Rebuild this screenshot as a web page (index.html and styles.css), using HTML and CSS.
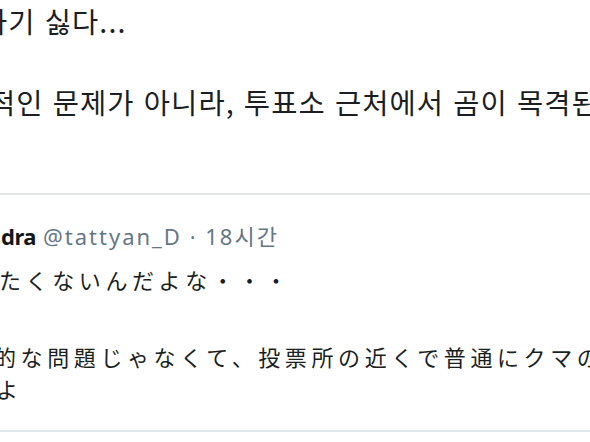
FILE: index.html
```html
<!DOCTYPE html>
<html lang="ko">
<head>
<meta charset="utf-8">
<title>Tweet</title>
<link rel="stylesheet" href="styles.css">
</head>
<body>
  <div class="crop">
    <div class="main-text">
      <p class="line kr l1">가기 싫다...</p>
      <p class="line kr l2">적인 문제가 아니라, 투표소 근처에서 곰이 목격된</p>
    </div>
    <article class="reply">
      <div class="reply-head"><span class="name">dra</span><span class="meta">@tattyan_D · 18시간</span></div>
      <p class="line jp j1" lang="ja">たくないんだよな・・・</p>
      <p class="line jp j2" lang="ja">的な問題じゃなくて、投票所の近くで普通にクマの</p>
      <p class="line jp j3" lang="ja">よ</p>
    </article>
  </div>
</body>
</html>
```
FILE: styles.css
```css
html, body {
  margin: 0;
  padding: 0;
  background: #ffffff;
  overflow: hidden;
}
body {
  width: 590px;
  height: 442px;
  font-family: "Noto Sans", "Noto Sans CJK KR", sans-serif;
  color: #14171a;
}
.main-text {
  padding-top: 1px;
}
.line {
  margin: 0;
  white-space: nowrap;
}
.kr {
  font-family: "Noto Sans CJK KR", sans-serif;
  font-size: 28.5px;
  line-height: 40px;
  letter-spacing: 1.1px;
  color: #1c1f22;
}
.l1 {
  margin-left: -19px;
  margin-bottom: 41px;
}
.l2 {
  margin-left: -11px;
}
.reply {
  margin-top: 71px;
  border-top: 2px solid #e1e5e8;
  border-bottom: 2px solid #e1e5e8;
  padding: 28px 0 26px;
}
.reply-head {
  font-size: 22px;
  line-height: 26px;
  white-space: nowrap;
  padding-left: 1px;
}
.name {
  font-weight: 700;
  color: #14171a;
  letter-spacing: -0.5px;
}
.meta {
  color: #657786;
  margin-left: 7px;
  letter-spacing: 2px;
}
.jp {
  font-family: "Noto Sans CJK JP", sans-serif;
  font-size: 22px;
  line-height: 32px;
  letter-spacing: 4.6px;
  color: #1c1f22;
}
.j1 {
  margin-top: 14px;
  margin-left: -1px;
}
.j2 {
  margin-top: 45px;
  margin-left: -6px;
}
.j3 {
  margin-left: -4px;
}
```
